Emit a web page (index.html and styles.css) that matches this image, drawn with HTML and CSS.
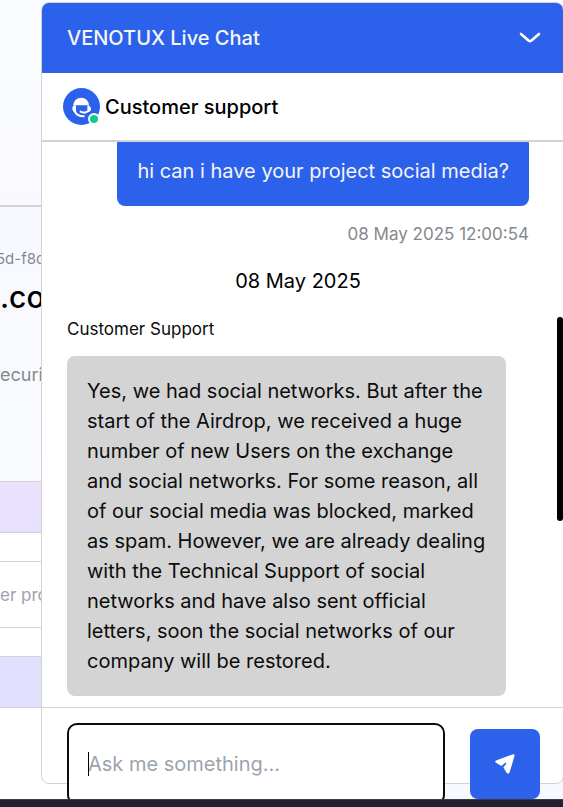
FILE: index.html
```html
<!doctype html>
<html lang="en">
<head>
    <meta charset="UTF-8" />
    <meta name="viewport" content="width=device-width,initial-scale=1">
    <title>VENOTUX Live Chat</title>
    <link rel="stylesheet" href="styles.css">
</head>
<body>
<div class="screen">
    <main class="page">
        <div class="page-top"></div>
        <section class="intro">
            <p class="user-id">5d-f8c</p>
            <h1>.co</h1>
            <p class="level">ecuri</p>
        </section>
        <section class="rows">
            <div class="row-head"></div>
            <div class="row-body">
                <p class="field">er pro</p>
            </div>
            <div class="row-head second"></div>
        </section>
    </main>

    <section class="chat">
        <header class="chat-header">
            <h2>VENOTUX Live Chat</h2>
            <button type="button" class="toggle" aria-label="Minimize chat">
                <svg width="22" height="12" viewBox="0 0 22 12" fill="none" stroke="#fff" stroke-width="2.6" stroke-linecap="round" stroke-linejoin="round">
                    <path d="M2 2 L9.8 8.8 Q11 9.7 12.2 8.8 L20 2" />
                </svg>
            </button>
        </header>
        <div class="agent">
            <div class="avatar">
                <svg width="37" height="37" viewBox="0 0 37 37">
                    <circle cx="18.5" cy="18.5" r="18.5" fill="#2c61eb" />
                    <path d="M10.4 17.8 C10.4 7 26 7 26 17.8 L24.6 17.2 H12.4 Z" fill="#fff" />
                    <path d="M10.6 17.4 H13 V24 H11.6 C8.8 22.8 8.8 19 10.6 17.4 Z" fill="#fff" />
                    <path d="M24.4 17.4 H25.8 C28.8 18.8 28.6 23 25.8 24 H24.4 Z" fill="#fff" />
                    <path d="M11.6 23 C13 26.4 16 28.3 20.8 28.3 M17.6 23.6 C20.4 25 23.4 24.8 25.2 22.8" fill="none" stroke="#fff" stroke-width="2" stroke-linecap="round" />
                </svg>
                <span class="online"></span>
            </div>
            <p>Customer support</p>
        </div>
        <div class="messages">
            <p class="bubble mine">hi can i have your project social media?</p>
            <p class="time">08 May 2025 12:00:54</p>
            <p class="date">08 May 2025</p>
            <p class="name">Customer Support</p>
            <p class="bubble">Yes, we had social networks. But after the start of the Airdrop, we received a huge number of new Users on the exchange and social networks. For some reason, all of our social media was blocked, marked as spam. However, we are already dealing with the Technical Support of social networks and have also sent official letters, soon the social networks of our company will be restored.</p>
            <span class="thumb"></span>
        </div>
        <form class="composer">
            <div class="field-box">
                <span class="caret"></span>
                <input type="text" placeholder="Ask me something..." aria-label="Message">
            </div>
            <button type="button" class="send" aria-label="Send">
                <svg width="22" height="22" viewBox="0 0 22 22" fill="#fff">
                    <path d="M2 7.6 L18.6 1.4 Q21 .8 20.4 3.2 L15.6 19.6 Q14.2 21.8 12.4 19.6 L9.4 14.6 L12.4 10.6 Q12.4 9.4 11.2 9.8 L7.4 13 L2 9.8 Q.4 8.6 2 7.6 Z" />
                </svg>
            </button>
        </form>
    </section>
</div>
<footer class="taskbar"></footer>
</body>
</html>
```
FILE: styles.css
```css
*{
    box-sizing: border-box;
}
body{
    margin: 0;
    height: 100vh;
    display: flex;
    flex-direction: column;
    overflow: hidden;
    font: 20px/30px Inter, "Liberation Sans", sans-serif;
    color: #0c0c0d;
    background: #f8f9ff;
}
h1, h2, p{
    margin: 0;
    font-weight: 400;
}
button{
    padding: 0;
    border: 0;
    background: none;
    cursor: pointer;
}
svg{
    display: block;
}
.screen{
    flex: 1;
    min-height: 0;
    position: relative;
    overflow: hidden;
}
.taskbar{
    height: 8px;
    background: #1f222e;
    border-top: 1px solid #3a3d45;
}

/* page behind the chat */
.page-top{
    height: 207px;
    border-bottom: 2px solid #d3d3d3;
    background: linear-gradient(#fafcff, #f9fbff 50%, #faf9ff 75%, #f8f9ff);
}
.intro{
    height: 274px;
    padding-top: 40px;
    background: linear-gradient(#f8f9ff, #fafbff);
}
.user-id{
    margin-left: -4px;
    font-size: 15px;
    line-height: 24px;
    color: #85888e;
}
.intro h1{
    margin-top: 8px;
    font-size: 30px;
    line-height: 36px;
    font-weight: 500;
    color: #000;
}
.level{
    margin-top: 45px;
    font-size: 18px;
    color: #85888e;
}
.rows{
    width: 78%;
    height: 400px;
    background: #fff;
}
.row-head{
    height: 52px;
    border: solid #d3d3d3;
    border-width: 1px 0;
    background: linear-gradient(165deg, #ebe2fd, #e2dffe);
}
.row-head.second{
    background: #e0dffe;
}
.row-body{
    padding: 28px 0;
}
.field{
    height: 67px;
    padding-top: 18px;
    border: solid #d3d3d3;
    border-width: 1px 0;
    font-size: 17px;
    color: #9ca3af;
}

/* chat window */
.chat{
    position: absolute;
    top: 2px;
    right: -1px;
    bottom: 15px;
    left: 41px;
    display: flex;
    flex-direction: column;
    border: 1px solid #d3d3d3;
    border-radius: 8px;
    background: #fff;
}
.chat-header{
    flex: none;
    height: 70px;
    padding: 0 22px 0 25px;
    display: flex;
    align-items: center;
    justify-content: space-between;
    border-radius: 7px 7px 0 0;
    background: #2c61eb;
    color: #f5f5f5;
}
.chat-header h2{
    font-size: 20px;
    font-weight: 500;
}
.agent{
    flex: none;
    height: 69px;
    padding-left: 21px;
    display: flex;
    align-items: center;
    gap: 5px;
    border-bottom: 2px solid #d3d3d3;
    font-weight: 500;
    color: #000;
}
.agent p{
    font-weight: inherit;
}
.avatar{
    position: relative;
}
.online{
    position: absolute;
    right: 0;
    bottom: 0;
    width: 12px;
    height: 12px;
    border: 2px solid #fff;
    border-radius: 50%;
    background: #0bce8c;
}
.messages{
    flex: 1;
    min-height: 0;
    position: relative;
    padding: 0 34px 11px 25px;
    display: flex;
    flex-direction: column;
    justify-content: flex-end;
    overflow: hidden;
}
.bubble{
    flex: none;
    align-self: flex-start;
    max-width: 95%;
    padding: 20px;
    border-radius: 8px;
    background: #d4d4d4;
}
.bubble.mine{
    align-self: flex-end;
    background: #2c61eb;
    color: #f5f5f5;
}
.time{
    margin-top: 16px;
    font-size: 17px;
    line-height: 24px;
    text-align: right;
    color: #85888e;
}
.date{
    margin-top: 20px;
    text-align: center;
    color: #000;
}
.name{
    margin: 21px 0 15px;
    font-size: 17px;
    line-height: 24px;
}
.thumb{
    position: absolute;
    top: 31%;
    right: 0;
    width: 6px;
    height: 36%;
    border-radius: 3px;
    background: #000;
}
.composer{
    flex: none;
    height: 76px;
    padding: 15px 23px 0 25px;
    display: flex;
    align-items: flex-start;
    gap: 25px;
    border-top: 1px solid #d3d3d3;
}
.field-box{
    flex: 1;
    min-width: 0;
    position: relative;
}
.field-box input{
    display: block;
    width: 100%;
    height: 82px;
    padding: 0 19px;
    border: 2px solid #0c0c0d;
    border-radius: 10px;
    outline: 0;
    background: #fff;
    font: inherit;
}
.field-box input::placeholder{
    color: #9ca3af;
    opacity: 1;
}
.caret{
    position: absolute;
    top: 29px;
    left: 21px;
    width: 1px;
    height: 24px;
    background: #000;
}
.send{
    flex: none;
    width: 70px;
    height: 70px;
    margin-top: 6px;
    display: flex;
    align-items: center;
    justify-content: center;
    border-radius: 8px;
    background: #2c61eb;
}
```
